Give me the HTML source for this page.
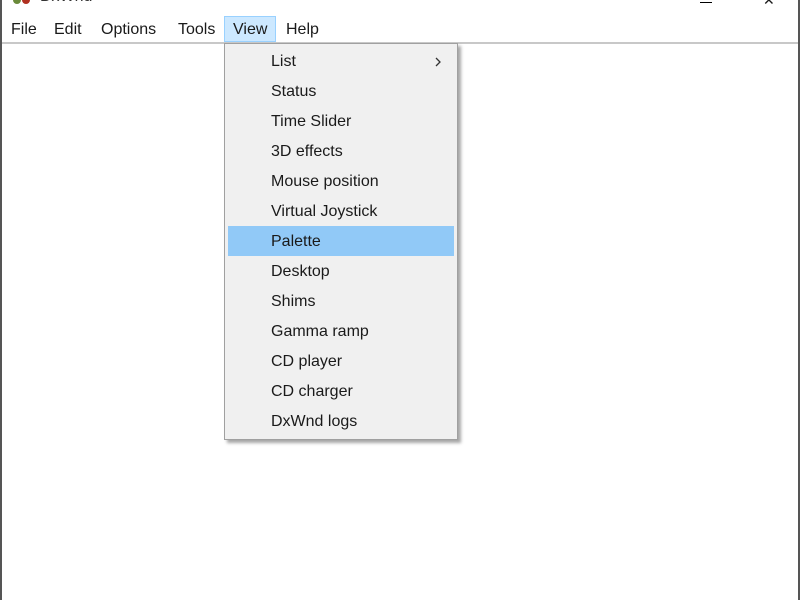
<!DOCTYPE html>
<html><head><style>
body{margin:0;width:800px;height:600px;background:#fff;position:relative;overflow:hidden;font-family:"Liberation Sans",sans-serif;font-size:16px;color:#1a1a1a}
.lb{position:absolute;left:0;top:0;width:2px;height:600px;background:#555}
.rb{position:absolute;right:0;top:0;width:2px;height:600px;background:#555}
.sep{position:absolute;left:2px;right:2px;top:42px;height:2px;background:#c8c8c8}
.mi{position:absolute;top:21px}
.vh{position:absolute;left:224px;top:16px;width:52px;height:26px;background:#cce8ff;border:1px solid #99d1ff;box-sizing:border-box}
.menu{position:absolute;left:224px;top:43px;width:234px;height:397px;background:#f0f0f0;border:1px solid #a0a0a0;box-sizing:border-box;box-shadow:3px 3px 3px rgba(0,0,0,.35)}
.it{position:absolute;left:46px;height:30px;line-height:30px}
.hl{position:absolute;left:3px;top:182px;width:226px;height:30px;background:#91c9f7}
</style></head><body>
<div class="lb"></div><div class="rb"></div>
<div style="position:absolute;left:13px;top:-4px;width:8px;height:8px;border-radius:50%;background:#6a8a3a"></div>
<div style="position:absolute;left:22px;top:-4px;width:8px;height:8px;border-radius:50%;background:#b03020"></div>
<div style="position:absolute;left:40px;top:-12px;font-size:16px;color:#333">DxWnd</div>
<div style="position:absolute;left:700px;top:2px;width:12px;height:1px;background:#000"></div>
<div style="position:absolute;left:763px;top:-8px;font-size:14px">✕</div>
<div class="sep"></div>
<div class="vh"></div>
<div class="mi" style="left:11px">File</div>
<div class="mi" style="left:54px">Edit</div>
<div class="mi" style="left:101px">Options</div>
<div class="mi" style="left:178px">Tools</div>
<div class="mi" style="left:233px">View</div>
<div class="mi" style="left:286px">Help</div>
<div class="menu">
<div class="hl"></div>
<div class="it" style="top:3px">List</div>
<svg style="position:absolute;left:209px;top:12px" width="8" height="12"><path d="M2 2 L6 6 L2 10" stroke="#333" stroke-width="1.3" fill="none"/></svg>
<div class="it" style="top:33px">Status</div>
<div class="it" style="top:63px">Time Slider</div>
<div class="it" style="top:93px">3D effects</div>
<div class="it" style="top:123px">Mouse position</div>
<div class="it" style="top:153px">Virtual Joystick</div>
<div class="it" style="top:183px">Palette</div>
<div class="it" style="top:213px">Desktop</div>
<div class="it" style="top:243px">Shims</div>
<div class="it" style="top:273px">Gamma ramp</div>
<div class="it" style="top:303px">CD player</div>
<div class="it" style="top:333px">CD charger</div>
<div class="it" style="top:363px">DxWnd logs</div>
</div>
</body></html>
